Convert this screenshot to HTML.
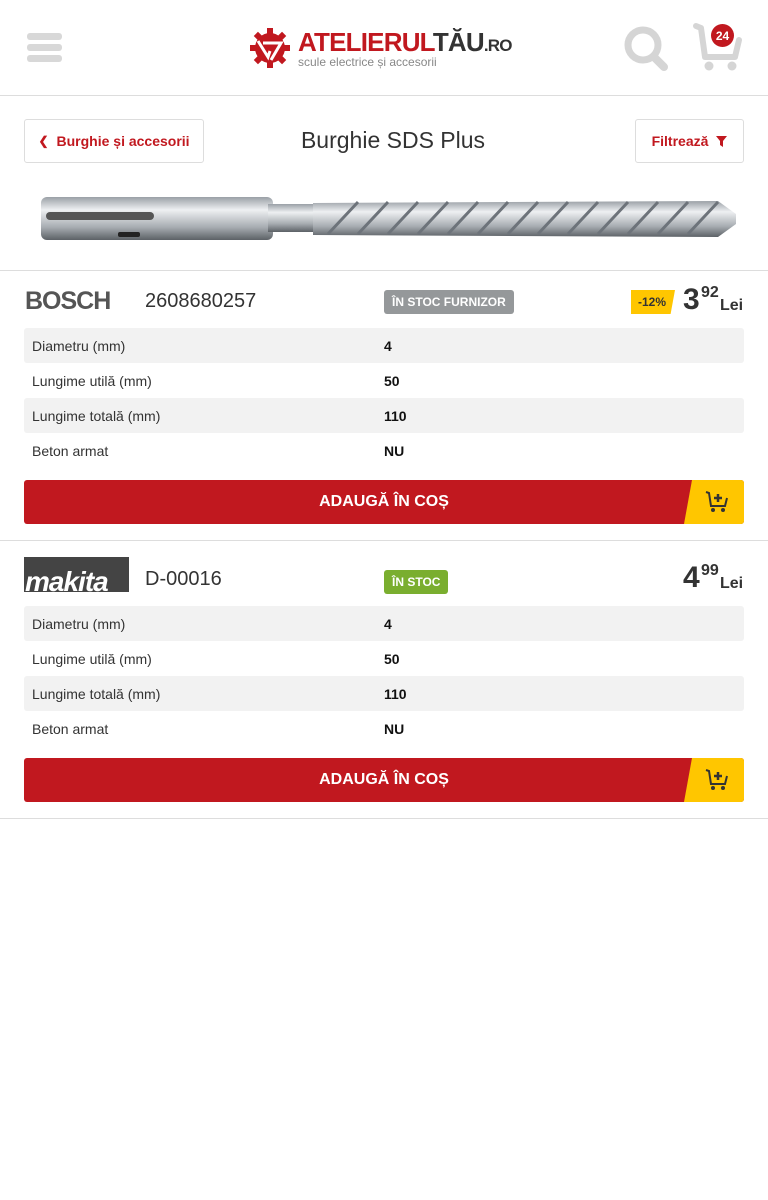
<!DOCTYPE html>
<html><head><meta charset="utf-8"><style>
*{box-sizing:border-box;margin:0;padding:0}
body{width:768px;height:1200px;background:#fff;font-family:"Liberation Sans",sans-serif;color:#333;position:relative;overflow:hidden}
.a{position:absolute}
.hb{left:27px;width:35px;height:7px;background:#d8d8d8;border-radius:3px}
.btn{border:1px solid #ddd;border-radius:3px;height:44px;display:flex;align-items:center;justify-content:center;color:#c1181f;font-size:14px;font-weight:bold}
.line{left:0;width:768px;height:1px;background:#ddd}
.row{left:24px;width:720px;height:35px;font-size:14px;display:flex;align-items:center;border-radius:3px}
.row span{position:absolute;left:8px}
.row b{position:absolute;left:360px;color:#111}
.g{background:#f2f2f2}
.add{left:24px;width:720px;height:44px;background:#c1181f;border-radius:3px;overflow:hidden;color:#fff;font-weight:bold;font-size:16px;display:flex;align-items:center;justify-content:center}
.add .y{position:absolute;right:0;top:0;width:60px;height:44px;background:#ffc600;clip-path:polygon(8px 0,100% 0,100% 100%,0 100%)}
.badge{color:#fff;font-size:12px;font-weight:bold;border-radius:3px;height:24px;display:flex;align-items:center;padding:0 8px}
.price{font-weight:bold;color:#333}
</style></head><body>
<div class="a hb" style="top:33px"></div><div class="a hb" style="top:44px"></div><div class="a hb" style="top:55px"></div>
<svg class="a" style="left:249px;top:27px" width="42" height="42" viewBox="0 0 42 42"><g fill="#c1181f"><circle cx="21" cy="21" r="15"/><g transform="translate(21 21)"><rect x="-3" y="-20" width="6" height="8"/><rect x="-3" y="12" width="6" height="8"/><rect x="-20" y="-3" width="8" height="6"/><rect x="12" y="-3" width="8" height="6"/><rect x="-3" y="-20" width="6" height="8" transform="rotate(45)"/><rect x="-3" y="-20" width="6" height="8" transform="rotate(135)"/><rect x="-3" y="-20" width="6" height="8" transform="rotate(225)"/><rect x="-3" y="-20" width="6" height="8" transform="rotate(315)"/></g></g><path d="M9 14 L19 30 L21 24 M14 16 L32 16 L22 33" stroke="#fff" stroke-width="3" fill="none"/></svg>
<div class="a" style="left:298px;top:27px;font-size:26px;font-weight:bold;letter-spacing:-0.8px;color:#c1181f;line-height:30px">ATELIERUL<span style="color:#333">TĂU</span><span style="color:#333;font-size:17px">.RO</span></div>
<div class="a" style="left:298px;top:55px;font-size:12px;color:#888">scule electrice și accesorii</div>
<svg class="a" style="left:622px;top:25px" width="48" height="48" viewBox="0 0 48 48"><circle cx="21" cy="20" r="15" fill="none" stroke="#d5d5d5" stroke-width="7"/><path d="M32 32 L42 42" stroke="#d5d5d5" stroke-width="8" stroke-linecap="round"/></svg>
<svg class="a" style="left:692px;top:22px" width="52" height="50" viewBox="0 0 52 50"><path d="M4 4 L9 6 L13 35 L43 35 L47 18" fill="none" stroke="#d5d5d5" stroke-width="6" stroke-linecap="round" stroke-linejoin="round"/><circle cx="17" cy="44" r="4.5" fill="#d5d5d5"/><circle cx="40" cy="44" r="4.5" fill="#d5d5d5"/></svg>
<div class="a" style="left:711px;top:24px;width:23px;height:23px;border-radius:50%;background:#c1181f;color:#fff;font-size:12px;font-weight:bold;display:flex;align-items:center;justify-content:center">24</div>
<div class="a line" style="top:95px"></div>
<div class="a btn" style="left:24px;top:119px;width:180px"><span style="font-size:12px;margin-right:8px">&#10094;</span>Burghie și accesorii</div>
<div class="a" style="left:280px;width:226px;top:127px;text-align:center;font-size:23px;color:#333">Burghie SDS Plus</div>
<div class="a btn" style="left:635px;top:119px;width:109px">Filtrează <svg style="margin-left:8px" width="11" height="11" viewBox="0 0 11 11"><path d="M0 0H11L7 5V11L4 9V5Z" fill="#c1181f"/></svg></div>
<svg class="a" style="left:38px;top:194px" width="700" height="52" viewBox="0 0 700 52"><defs><linearGradient id="m" x1="0" y1="0" x2="0" y2="1"><stop offset="0" stop-color="#9aa0a6"/><stop offset=".3" stop-color="#eef0f2"/><stop offset=".7" stop-color="#a8adb2"/><stop offset="1" stop-color="#5c6166"/></linearGradient></defs><rect x="3" y="3" width="232" height="43" rx="6" fill="url(#m)"/><rect x="230" y="10" width="50" height="28" fill="url(#m)"/><path d="M275 9 L680 7 L698 20 L698 30 L680 43 L275 41Z" fill="url(#m)"/><g stroke="#6d737a" stroke-width="3" fill="none"><path d="M290 40 L320 8 M320 40 L350 8 M350 40 L380 8 M380 40 L410 8 M410 40 L440 8 M440 40 L470 8 M470 40 L500 8 M500 40 L530 8 M530 40 L560 8 M560 40 L590 8 M590 40 L620 8 M620 40 L650 8 M650 40 L680 8"/></g><rect x="8" y="18" width="108" height="8" rx="4" fill="#555"/><rect x="80" y="38" width="22" height="5" rx="2" fill="#222"/></svg>
<div class="a line" style="top:270px"></div>

<div class="a" style="left:25px;top:287px;font-size:25px;font-weight:bold;color:#555;letter-spacing:-1px">BOSCH</div>
<div class="a" style="left:145px;top:290px;font-size:20px;color:#333">2608680257</div>
<div class="a badge" style="left:384px;top:290px;background:#95989a">ÎN STOC FURNIZOR</div>
<div class="a" style="left:631px;top:290px;width:44px;height:24px;background:#ffc600;clip-path:polygon(0 0,100% 0,90% 100%,0 100%);font-size:12px;font-weight:bold;color:#333;display:flex;align-items:center;padding-left:7px">-12%</div>
<div class="a price" style="left:683px;top:283px;font-size:30px">3</div>
<div class="a price" style="left:701px;top:284px;font-size:16px">92</div>
<div class="a price" style="left:720px;top:297px;font-size:16px">Lei</div>
<div class="a row g" style="top:328px"><span>Diametru (mm)</span><b>4</b></div>
<div class="a row" style="top:363px"><span>Lungime utilă (mm)</span><b>50</b></div>
<div class="a row g" style="top:398px"><span>Lungime totală (mm)</span><b>110</b></div>
<div class="a row" style="top:433px"><span>Beton armat</span><b>NU</b></div>
<div class="a add" style="top:480px">ADAUGĂ ÎN COȘ<div class="y"><svg style="position:absolute;left:21px;top:10px" width="24" height="24" viewBox="0 0 24 24"><path d="M1 2 L4 3 L6 16 L20 16 L22 8" fill="none" stroke="#333" stroke-width="2"/><path d="M13 4V12M9 8H17" stroke="#333" stroke-width="2.5"/><circle cx="8" cy="20" r="2" fill="#333"/><circle cx="18" cy="20" r="2" fill="#333"/></svg></div></div>
<div class="a line" style="top:540px"></div>

<div class="a" style="left:24px;top:557px;width:105px;height:35px;background:#444;color:#fff;font-size:28px;font-weight:bold;font-style:italic;line-height:50px;overflow:hidden;letter-spacing:-1px;padding-left:1px">makita</div>
<div class="a" style="left:145px;top:568px;font-size:20px;color:#333">D-00016</div>
<div class="a badge" style="left:384px;top:570px;background:#7aae2f">ÎN STOC</div>
<div class="a price" style="left:683px;top:561px;font-size:30px">4</div>
<div class="a price" style="left:701px;top:562px;font-size:16px">99</div>
<div class="a price" style="left:720px;top:575px;font-size:16px">Lei</div>
<div class="a row g" style="top:606px"><span>Diametru (mm)</span><b>4</b></div>
<div class="a row" style="top:641px"><span>Lungime utilă (mm)</span><b>50</b></div>
<div class="a row g" style="top:676px"><span>Lungime totală (mm)</span><b>110</b></div>
<div class="a row" style="top:711px"><span>Beton armat</span><b>NU</b></div>
<div class="a add" style="top:758px">ADAUGĂ ÎN COȘ<div class="y"><svg style="position:absolute;left:21px;top:10px" width="24" height="24" viewBox="0 0 24 24"><path d="M1 2 L4 3 L6 16 L20 16 L22 8" fill="none" stroke="#333" stroke-width="2"/><path d="M13 4V12M9 8H17" stroke="#333" stroke-width="2.5"/><circle cx="8" cy="20" r="2" fill="#333"/><circle cx="18" cy="20" r="2" fill="#333"/></svg></div></div>
<div class="a line" style="top:818px"></div>
</body></html>
